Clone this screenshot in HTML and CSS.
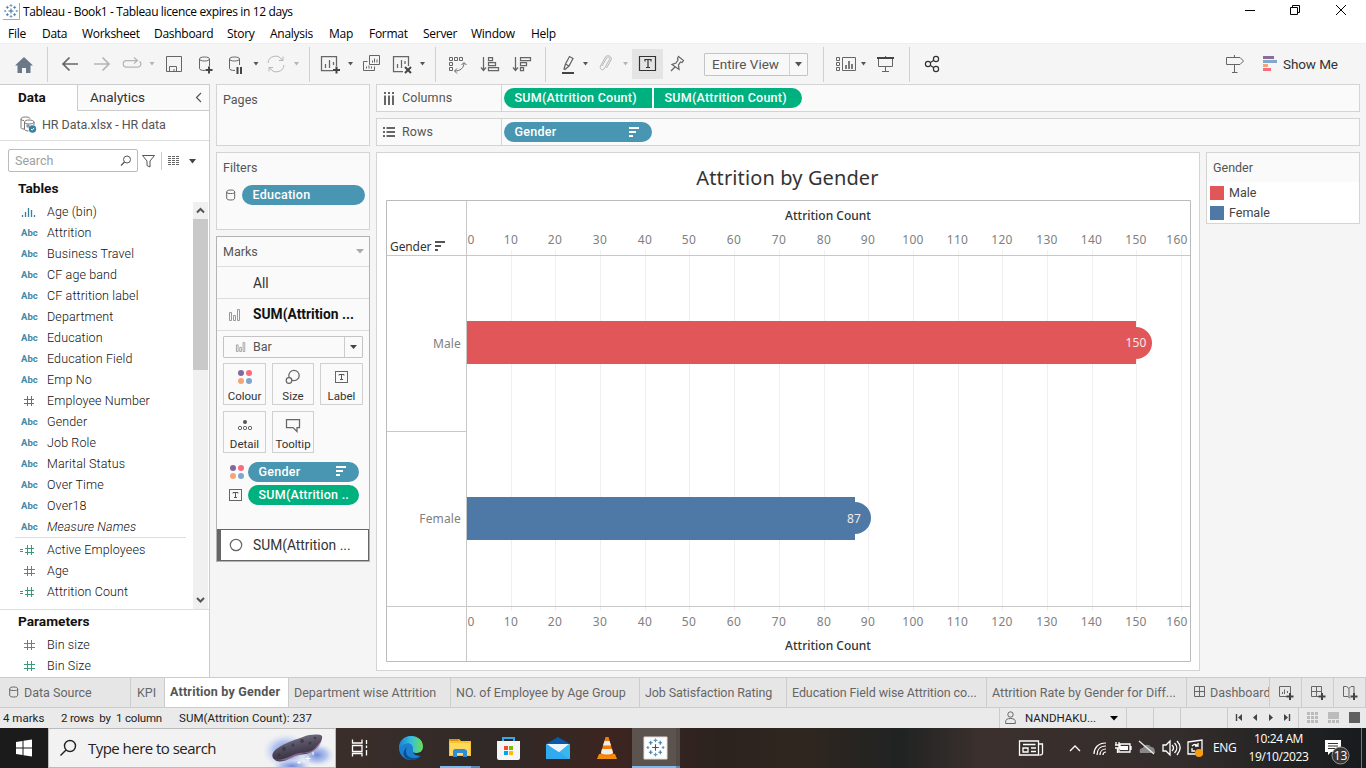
FILE: index.html
```html
<!DOCTYPE html>
<html lang="en">
<head>
<meta charset="utf-8">
<title>Tableau - Book1</title>
<link rel="stylesheet" href="styles.css">
</head>
<body>
<svg width="0" height="0" class="defs">
  <defs>
    <symbol id="hash" viewBox="0 0 18 12"><path d="M7.500 1v10M11.500 1v10M4 4.500h11M4 8.500h11" stroke="#3a9a78" fill="none"/></symbol>
    <symbol id="eqhash" viewBox="0 0 18 12"><path d="M7.500 1v10M11.500 1v10M5 4.500h9M5 8.500h9M0 5.500h3M0 7.500h3" stroke="#3a9a78" fill="none"/></symbol>
    <symbol id="sort" viewBox="0 0 12 11"><path d="M0 1h10M0 5h7M0 9h4" stroke="currentColor" stroke-width="2" fill="none"/></symbol>
    <symbol id="dots" viewBox="0 0 16 16"><circle cx="4" cy="4" r="3" fill="#83689a"/><circle cx="12" cy="4" r="3" fill="#fb6b7d"/><circle cx="4" cy="12" r="3" fill="#f4a578"/><circle cx="12" cy="12" r="3" fill="#7fa6cd"/></symbol>
    <symbol id="tbox" viewBox="0 0 14 12"><rect x=".5" y=".5" width="12" height="11" fill="none" stroke="#666"/><path d="M4 4.500V3.500h5v1M6.500 3.500V9M5 8.500h3" fill="none" stroke="#555"/></symbol>
    <symbol id="bars" viewBox="0 0 14 12"><path d="M1.500 3.500h2v8h-2zM5.500 6.500h2v5h-2zM9.500 .5h2v11h-2z" fill="none" stroke="#999"/></symbol>
    <symbol id="cyl" viewBox="0 0 10 12"><path d="M.7 3v6c0 1.300 1 2 4 2s4-.7 4-2V3M.7 3c0-1.300 1.200-2 4-2s4 .7 4 2-1.200 1.500-4 1.500S.7 4.300.7 3z" fill="none" stroke="#666"/></symbol>
    <symbol id="tableau" viewBox="0 0 22 22"><g fill="none" stroke-width="1.200"><path d="M11 7.500v7M7.500 11h7" stroke="#2a5b8c"/><path d="M11 1.500v4M9 3.500h4M11 16.500v4M9 18.500h4M1.500 11h3M3 9.500v3M17.500 11h3M19 9.500v3" stroke="#6a93b8"/><path d="M6 4v4M4 6h4M16 4v4M14 6h4M6 14v4M4 16h4M16 14v4M14 16h4" stroke="#3f7cab"/></g></symbol>
  </defs>
</svg>

<header class="titlebar">
  <svg class="app-icon" width="17" height="18" viewBox="0 0 17 18"><path d="M0 17.500h16.500V1" fill="none" stroke="#aaa"/><use href="#tableau" x="0" y="1" width="16" height="16" stroke-width="2"/></svg>
  <span class="win-title">Tableau - Book1 - Tableau licence expires in 12 days</span>
  <svg class="win-controls" width="136" height="24" viewBox="1230 0 136 24"><path d="M1245 10.500h10M1290.500 7.500h7v7h-7zM1292.500 7v-1.500h7v7h-1.500M1336 5l10 10M1346 5l-10 10" fill="none" stroke="#000"/></svg>
</header>

<nav class="menubar"><span>File</span><span>Data</span><span>Worksheet</span><span>Dashboard</span><span>Story</span><span>Analysis</span><span>Map</span><span>Format</span><span>Server</span><span>Window</span><span>Help</span></nav>

<div class="toolbar">
  <svg width="47" height="40" viewBox="0 44 47 40"><path d="M24 57l9 8.500h-2.500V73H26v-5h-4v5h-4.500v-7.500H15z" fill="#6a7887"/></svg>
  <i class="sep"></i>
  <svg width="39" height="40" viewBox="48 44 39 40"><path d="M63 64h15M69.500 57.500L63 64l6.500 6.500" class="ic bold"/></svg>
  <svg width="30" height="40" viewBox="87 44 30 40"><path d="M94 64h15M102.500 57.500L109 64l-6.500 6.500" class="ic bold off"/></svg>
  <svg width="43" height="40" viewBox="117 44 43 40"><path d="M137 60.500h-10.500a3 3 0 0 0 0 6.500h11a3 3 0 0 0 2-5.500M134 57.500l3.500 3-3.500 3" class="ic off thick"/><path d="M149.500 62h5l-2.500 3.500z" fill="#b5b5b5"/></svg>
  <svg width="30" height="40" viewBox="160 44 30 40"><path d="M166.500 56.500h15v15h-15zM169.500 71v-4.500h7V71M174 69v2" class="ic"/></svg>
  <svg width="31" height="40" viewBox="190 44 31 40"><path d="M205 70.500c-3.500 0-5.500-.8-5.500-2V59c0-1.300 2-2 5-2s5 .7 5 2v7M199.500 59c0 1.200 2 2 5 2s5-.8 5-2" class="ic"/><path d="M209 66.500v7M205.500 70h7" class="ic dark"/></svg>
  <svg width="41" height="40" viewBox="221 44 41 40"><path d="M235 70.500c-3.500 0-5.500-.8-5.500-2V59c0-1.300 2-2 5-2s5 .7 5 2v6M229.500 59c0 1.200 2 2 5 2s5-.8 5-2" class="ic"/><path d="M237.500 67v7M241 67v7" class="ic dark"/><path d="M253.500 62h5l-2.500 3.500z" fill="#555"/></svg>
  <svg width="47" height="40" viewBox="262 44 47 40"><path d="M268 63a7.500 7.500 0 0 1 14-3M284 65a7.500 7.500 0 0 1-14 3M279 60.500h4v-4M273 67.500h-4v4" class="ic off"/><path d="M294 62h5l-2.500 3.500z" fill="#b5b5b5"/></svg>
  <i class="sep"></i>
  <svg width="48" height="40" viewBox="310 44 48 40"><path d="M333 70.500h-11.500v-14h15V66M325.500 68v-4M329.500 68v-8M333.500 65v-3" class="ic thick"/><path d="M336.500 66.500v7M333 70h7" class="ic dark"/><path d="M348 62h5l-2.500 3.500z" fill="#555"/></svg>
  <svg width="30" height="40" viewBox="358 44 30 40"><path d="M369.500 55.500h10v9h-10zM367.500 61.500h-4v9h11v-4M372.500 62.500v-2M374.500 62.500v-4M377 62.500v-3M366.500 68.500v-2M369 68.500v-3M371.500 68.500v-2" class="ic"/></svg>
  <svg width="47" height="40" viewBox="388 44 47 40"><path d="M403 71.500h-9.500v-15h15V66M397.500 68v-4M401.500 68v-8M405 64v-3" class="ic thick"/><path d="M405 67l6 6M411 67l-6 6" class="ic dark"/><path d="M420 62h5l-2.500 3.500z" fill="#555"/></svg>
  <i class="sep"></i>
  <svg width="39" height="40" viewBox="436 44 39 40"><path d="M449.500 57.500h3v3h-3zM454.500 57.500h3v3h-3zM459.500 57.500h3v3h-3zM449.500 62.500h3v3h-3zM449.500 67.500h3v3h-3zM455 71c5 0 9-3 9-8M461.500 65l2.500-2.500 2.500 2.500M457 68.500l-2.500 2.500 2.500 2.500" class="ic"/></svg>
  <svg width="31" height="40" viewBox="475 44 31 40"><path d="M483.500 57v13M481 67.500l2.500 3 2.500-3M488.500 57.500h4v3h-4zM488.500 62.500h7v3h-7zM488.500 67.500h10v3h-10z" class="ic thick"/></svg>
  <svg width="39" height="40" viewBox="506 44 39 40"><path d="M515.500 57v13M513 67.500l2.500 3 2.500-3M520.500 57.500h10v3h-10zM520.500 62.500h6v3h-6zM520.500 67.500h3v3h-3z" class="ic thick"/></svg>
  <i class="sep"></i>
  <svg width="46" height="40" viewBox="546 44 46 40"><path d="M564 69l1.500-5 4-7.500 3.500 2-4 7.500-4 3.500zM565.500 64l3.500 2" class="ic thick"/><path d="M562 73h12" class="ic dark"/><path d="M583 62h5l-2.500 3.500z" fill="#555"/></svg>
  <svg width="40" height="40" viewBox="592 44 40 40"><path d="M602 66l5-8.500c1-1.500 3.500 0 2.500 2l-5.500 9.500c-1.500 2-5 0-3.500-3l5-9c2-3 7-.5 5.500 3l-4.500 8" class="ic off"/><path d="M623 62h5l-2.500 3.500z" fill="#b5b5b5"/></svg>
  <svg class="pressed" width="31" height="30" viewBox="632 49 31 30"><path d="M639.500 56.500h16v14h-16zM645 61.500v-2h6v2M648 59.500v8M646 67.500h4" class="ic black"/></svg>
  <svg width="41" height="40" viewBox="663 44 41 40"><path d="M678.500 56.500l5 4-1.500 2-1.500-.5-2 3 .5 4.500-7-5 4-1.500 2-3-.5-1.500zM675 67l-4 4" class="ic thick"/></svg>
  <div class="fit-select"><span>Entire View</span><b><svg width="8" height="5"><path d="M0 0h7L3.500 4.500z" fill="#555"/></svg></b></div>
  <i class="gap15"></i><i class="sep"></i>
  <svg width="48" height="40" viewBox="824 44 48 40"><path d="M836.500 57.500h3v3h-3zM836.500 62.500h3v3h-3zM836.500 67.500h3v3h-3zM842.500 57.500h13v13h-13z" class="ic"/><path d="M846 69v-4M849 69v-8M852 69v-5" class="ic bold"/><path d="M861 62h5l-2.500 3.500z" fill="#555"/></svg>
  <svg width="37" height="40" viewBox="872 44 37 40"><path d="M878.500 58v8.500h14V58M885.500 56v2M885.500 67v4M882 71.500h7" class="ic"/><path d="M877 58h17" class="ic dark"/></svg>
  <i class="sep"></i>
  <svg width="290" height="40" viewBox="910 44 290 40"><circle cx="928" cy="64" r="2.600" class="ic black"/><circle cx="936" cy="59" r="2.600" class="ic black"/><circle cx="936" cy="69" r="2.600" class="ic black"/><path d="M930.500 62.500l3-2M930.500 65.500l3 2" class="ic black"/></svg>
  <svg width="60" height="40" viewBox="1200 44 60 40"><path d="M1226.500 57.500h13.500l3.500 3.500-3.500 3.500h-13.500zM1234.500 55v2M1234.500 65v7M1232 72.500h5.500" class="ic"/></svg>
  <svg width="23" height="40" viewBox="1260 44 23 40"><path d="M1263 56h11v3h-11z" fill="#8a6d99"/><path d="M1263 60h14v3h-14z" fill="#82a6cc"/><path d="M1263 64h5v3h-5z" fill="#f4a578"/><path d="M1263 68h8v3h-8z" fill="#fb6b7d"/></svg>
  <span class="showme">Show Me</span>
</div>

<main class="workspace">
  <aside class="data-pane">
    <div class="pane-tabs"><b>Data</b><span>Analytics</span><svg width="20" height="26"><path d="M12 8l-4.500 4.500L12 17" fill="none" stroke="#555" stroke-width="1.200"/></svg></div>
    <div class="source"><svg width="18" height="18" viewBox="0 0 18 18"><path d="M4 13c-2 0-3-.5-3-1.500V3c0-1.500 2-2 4.500-2S10 1.500 10 2.500M1 3c0 1 1.500 1.500 3 1.500M4.500 6v7c0 1.500 2 2 4 2M4.500 6c0-1.300 2-2 4.500-2s5 .7 5 2-2 2-5 2-4.500-.7-4.500-2zM14 6v3M6 10h4M8 8v4" fill="none" stroke="#777"/><circle cx="12.500" cy="13" r="3.700" fill="#3480a0"/><path d="M11 13l1.200 1.200 2-2.300" stroke="#fff" fill="none"/></svg><span>HR Data.xlsx - HR data</span></div>
    <div class="search-row">
      <div class="search"><span>Search</span><svg width="12" height="12"><circle cx="7" cy="4.500" r="3.500" fill="none" stroke="#555"/><path d="M4.500 7L1 10.500" stroke="#555" stroke-width="1.300"/></svg></div>
      <svg width="62" height="24" viewBox="137 148 62 24"><path d="M142.500 154.500h12l-4.500 5.500v6l-3-1.500V160z" fill="none" stroke="#555"/><path d="M161.500 151v18" stroke="#ccc"/><path d="M168 155.500h12M168 157.500h12M168 159.500h12M168 161.500h12M168 163.500h12" stroke="#666" stroke-dasharray="3 1" /><path d="M189 158h7l-3.500 4.500z" fill="#444"/></svg>
    </div>
    <h3 class="tables-h">Tables</h3>
    <div class="fields">
      <ul>
        <li><svg width="18" height="12"><path d="M2.500 9v2M5.500 6v5M8.500 2v9M11.500 4v7M14.500 9v2" stroke="#35809f" fill="none" stroke-width="1.300"/></svg>Age (bin)</li>
        <li><em>Abc</em>Attrition</li><li><em>Abc</em>Business Travel</li><li><em>Abc</em>CF age band</li><li><em>Abc</em>CF attrition label</li><li><em>Abc</em>Department</li><li><em>Abc</em>Education</li><li><em>Abc</em>Education Field</li><li><em>Abc</em>Emp No</li>
        <li><svg width="18" height="12"><path d="M7.500 1v10M11.500 1v10M4 4.500h10M4 8.500h10" stroke="#35809f" fill="none"/></svg>Employee Number</li>
        <li><em>Abc</em>Gender</li><li><em>Abc</em>Job Role</li><li><em>Abc</em>Marital Status</li><li><em>Abc</em>Over Time</li><li><em>Abc</em>Over18</li><li class="slanted"><em>Abc</em>Measure Names</li>
        <li class="rule"></li>
        <li><svg width="18" height="12"><use href="#eqhash"/></svg>Active Employees</li><li><svg width="18" height="12"><use href="#hash"/></svg>Age</li><li><svg width="18" height="12"><use href="#eqhash"/></svg>Attrition Count</li>
      </ul>
      <div class="scroll"><svg width="15" height="17"><path d="M4 10.500l3.500-3.500 3.500 3.500" fill="none" stroke="#555" stroke-width="2"/></svg><i></i><svg width="15" height="17"><path d="M4 6l3.500 3.500L11 6" fill="none" stroke="#555" stroke-width="2"/></svg></div>
    </div>
    <div class="params">
      <h3>Parameters</h3>
      <ul><li><svg width="18" height="12"><use href="#hash"/></svg>Bin size</li><li><svg width="18" height="12"><use href="#hash"/></svg>Bin Size</li></ul>
    </div>
  </aside>

  <section class="cards">
    <div class="card pages"><h4>Pages</h4></div>
    <div class="card filters"><h4>Filters</h4><div class="filter-row"><svg width="10" height="12"><use href="#cyl"/></svg><span class="pill blue">Education</span></div></div>
    <div class="card marks">
      <div class="marks-h"><h4>Marks</h4><svg width="8" height="5"><path d="M0 0h8L4 4.500z" fill="#aaa"/></svg></div>
      <div class="mark-row"><span></span>All</div>
      <div class="mark-row strong"><svg width="14" height="12"><use href="#bars"/></svg>SUM(Attrition ...</div>
      <div class="mark-body">
        <div class="type-select"><svg width="12" height="10"><use href="#bars"/></svg><span>Bar</span><b><svg width="7" height="4"><path d="M0 0h7L3.500 4z" fill="#444"/></svg></b></div>
        <div class="mark-buttons">
          <div><svg width="16" height="16"><use href="#dots"/></svg>Colour</div>
          <div><svg width="16" height="16"><circle cx="9" cy="6.500" r="5.200" class="ic thick"/><circle cx="4" cy="11.500" r="2.800" class="ic thick knock"/></svg>Size</div>
          <div><svg width="14" height="16" viewBox="0 -2 14 16"><use href="#tbox" width="14" height="12"/></svg>Label</div>
          <div><svg width="16" height="16"><circle cx="8" cy="5" r="2" fill="#555"/><circle cx="3" cy="11" r="1.700" class="ic"/><circle cx="8" cy="11" r="1.700" class="ic"/><circle cx="13" cy="11" r="1.700" class="ic"/></svg>Detail</div>
          <div><svg width="16" height="16"><path d="M1.500 2.500h13v8H12v4l-4-4H1.500z" class="ic thick"/></svg>Tooltip</div>
        </div>
        <div class="enc"><svg width="16" height="16"><use href="#dots"/></svg><span class="pill blue">Gender<svg width="12" height="11"><use href="#sort"/></svg></span></div>
        <div class="enc"><svg width="14" height="12"><use href="#tbox"/></svg><span class="pill green">SUM(Attrition ..</span></div>
      </div>
      <div class="mark-row last"><svg width="14" height="14"><circle cx="7" cy="7" r="5.700" fill="none" stroke="#666" stroke-width="1.200"/></svg>SUM(Attrition ...</div>
    </div>
  </section>

  <section class="stage">
    <div class="shelf"><div class="shelf-h"><svg width="12" height="13"><path d="M2 0v2M6 0v2M10 0v2M2 3.500V13M6 3.500V13M10 3.500V13" stroke="#666" stroke-width="2"/></svg>Columns</div><span class="pill green first">SUM(Attrition Count)</span><span class="pill green second">SUM(Attrition Count)</span></div>
    <div class="shelf"><div class="shelf-h"><svg width="12" height="11"><path d="M0 1h2M0 5h2M0 9h2M3.500 1H12M3.500 5H12M3.500 9H12" stroke="#666" stroke-width="2"/></svg>Rows</div><span class="pill blue">Gender<svg width="12" height="11"><use href="#sort"/></svg></span></div>
    <div class="views">
      <div class="viz">
        <h1>Attrition by Gender</h1>
        <svg class="chart" width="805" height="462" viewBox="386 200 805 462">
          <path class="grid" d="M511.500 250v361M555.500 250v361M600.500 250v361M645.500 250v361M689.500 250v361M734.500 250v361M779.500 250v361M824.500 250v361M868.500 250v361M913.500 250v361M958.500 250v361M1002.500 250v361M1047.500 250v361M1092.500 250v361M1136.500 250v361M1181.500 250v361"/>
          <path class="rules" d="M387 255.500h803M387 606.500h803M387 431.500h79M466.500 201v460"/>
          <path class="frame" d="M386.500 200.500h804v461h-804z"/>
          <path d="M467 321h669v43H467z" fill="#e15759"/><circle cx="1136" cy="343" r="16" fill="#e15759"/>
          <path d="M467 497h388v43H467z" fill="#4e79a7"/><circle cx="855" cy="518" r="16" fill="#4e79a7"/>
          <g class="axis"><text x="471" y="244">0</text><text x="511" y="244">10</text><text x="555" y="244">20</text><text x="600" y="244">30</text><text x="645" y="244">40</text><text x="689" y="244">50</text><text x="734" y="244">60</text><text x="779" y="244">70</text><text x="824" y="244">80</text><text x="868" y="244">90</text><text x="913" y="244">100</text><text x="957.500" y="244">110</text><text x="1002" y="244">120</text><text x="1047" y="244">130</text><text x="1091.500" y="244">140</text><text x="1136" y="244">150</text><text x="1177" y="244">160</text></g>
          <g class="axis"><text x="471" y="626">0</text><text x="511" y="626">10</text><text x="555" y="626">20</text><text x="600" y="626">30</text><text x="645" y="626">40</text><text x="689" y="626">50</text><text x="734" y="626">60</text><text x="779" y="626">70</text><text x="824" y="626">80</text><text x="868" y="626">90</text><text x="913" y="626">100</text><text x="957.500" y="626">110</text><text x="1002" y="626">120</text><text x="1047" y="626">130</text><text x="1091.500" y="626">140</text><text x="1136" y="626">150</text><text x="1177" y="626">160</text></g>
          <text class="axis-title" x="828" y="220">Attrition Count</text><text class="axis-title" x="828" y="650">Attrition Count</text>
          <text class="field-label" x="390" y="251">Gender</text>
          <path d="M435 242h10M435 246h6M435 250h3" stroke="#555" stroke-width="2"/>
          <text class="member" x="461" y="348">Male</text><text class="member" x="461" y="523">Female</text>
          <text class="value" x="1136" y="347">150</text><text class="value" x="854" y="523">87</text>
        </svg>
      </div>
      <div class="legend"><h4>Gender</h4><p><i class="male"></i>Male</p><p><i class="female"></i>Female</p></div>
    </div>
  </section>
</main>

<div class="sheet-tabs">
  <span class="t-source"><svg width="10" height="12"><use href="#cyl"/></svg>Data Source</span><span class="kpi">KPI</span><span class="active">Attrition by Gender</span><span>Department wise Attrition</span><span>NO. of Employee by Age Group</span><span class="tight">Job Satisfaction Rating</span><span class="tight">Education Field wise Attrition co...</span><span>Attrition Rate by Gender for Diff...</span><span class="t-dash"><svg width="12" height="12"><path d="M.5.5h10v10H.5zM5.500.5v10M.5 5.500h10" fill="none" stroke="#666"/></svg>Dashboard</span>
  <span class="t-icon"><svg width="18" height="16"><path d="M9 11.500H1.500V1.500h11V8M4.500 9V7M6.500 9V4.500M9.500 8V6" class="ic"/><path d="M12 8v7M8.500 11.500h7" class="ic dark"/></svg></span><span class="t-icon"><svg width="18" height="16"><path d="M9 11.500H1.500V1.500h10V8M6.500 1.500v10M1.500 6.500h10" class="ic"/><path d="M12 8v7M8.500 11.500h7" class="ic dark"/></svg></span><span class="t-icon"><svg width="18" height="16"><path d="M8 13.500l-2-2H1.500V1.500h3l2.500 2 2-2h3V8M7 3.500v9" class="ic"/><path d="M12 8v7M8.500 11.500h7" class="ic dark"/></svg></span>
</div>

<div class="status">
  <span class="s1">4 marks</span><span class="s2">2 rows&nbsp; by&nbsp; 1 column</span><span class="s3">SUM(Attrition Count): 237</span>
  <div class="user"><svg width="12" height="14"><circle cx="5.500" cy="3.500" r="2.700" class="ic"/><path d="M.7 12.500v-2c0-2 1.500-3 4.800-3s4.800 1 4.800 3v2z" class="ic"/></svg><span>NANDHAKU...</span><svg width="8" height="5"><path d="M0 0h8L4 4.500z"/></svg></div>
  <i class="cell"></i><i class="cell"></i><i class="cell wide"></i>
  <svg width="71" height="20" viewBox="1228 708 71 20"><path d="M1236.500 714v7M1289.500 714v7" stroke="#444" stroke-width="1.400"/><path d="M1242 714v7l-4-3.500zM1257 714v7l-4-3.500zM1269 714v7l4-3.500zM1284 714v7l4-3.500z" fill="#444"/><path d="M1298.500 708v20" stroke="#ccc"/></svg>
  <svg width="67" height="20" viewBox="1299 708 67 20"><path d="M1307 712h3v3h-3zM1311 712h3v3h-3zM1315 712h3v3h-3zM1307 716h3v3h-3zM1311 716h3v3h-3zM1315 716h3v3h-3zM1307 720h3v3h-3zM1311 720h3v3h-3zM1315 720h3v3h-3zM1328 712h11v7h-11zM1328 720h3v3h-3zM1332 720h3v3h-3zM1336 720h3v3h-3z" fill="#bbb"/><path d="M1349 712h11v11h-11z" fill="#606060"/></svg>
</div>

<footer class="taskbar">
  <svg class="start" width="48" height="40" viewBox="0 728 48 40"><path d="M16 742l6.500-1v6.500H16zM23.500 740.800l8.500-1.300v8H23.500zM16 748.500h6.500v6.500l-6.500-1zM23.500 748.500H32v8l-8.500-1.300z" fill="#fff"/></svg>
  <div class="tb-search">
    <svg width="18" height="18"><circle cx="11" cy="7" r="5.500" fill="none" stroke="#222" stroke-width="1.400"/><path d="M7 11l-5.500 5.500" stroke="#222" stroke-width="1.400"/></svg>
    <span>Type here to search</span>
    <svg class="rock" width="72" height="38" viewBox="262 729 72 38">
      <defs><radialGradient id="glow"><stop offset="0" stop-color="#7288d8"/><stop offset=".55" stop-color="#a8bcec" stop-opacity=".8"/><stop offset="1" stop-color="#dfe6fa" stop-opacity="0"/></radialGradient><linearGradient id="stone" x1="0" y1="0" x2=".4" y2="1"><stop offset="0" stop-color="#8a8699"/><stop offset=".5" stop-color="#555062"/><stop offset="1" stop-color="#2e2839"/></linearGradient></defs>
      <ellipse cx="286" cy="751" rx="24" ry="18" fill="url(#glow)"/><ellipse cx="317" cy="755" rx="18" ry="12" fill="url(#glow)"/><ellipse cx="292" cy="766" rx="20" ry="7" fill="url(#glow)"/>
      <path d="M273 758c-2-4 1-8 8-12 9-5 14-6 22-9 7-3 17-3 19-1 1 4-4 12-9 15-5 4-13 3-18 5-8 4-17 9-22 2z" fill="url(#stone)"/><path d="M273 758c2 3 10 2 20-3 9-4 15-1 21-6l8-9c-2 8-7 13-14 13-9 0-13 5-21 7-6 1-12 1-14-2z" fill="#c795c4" opacity=".5"/>
      <g fill="#34303f" opacity=".65"><circle cx="284" cy="749" r="2"/><circle cx="293" cy="745" r="1.500"/><circle cx="302" cy="741" r="2"/><circle cx="310" cy="743" r="1.500"/><circle cx="279" cy="755" r="1.500"/><circle cx="315" cy="738" r="1.300"/></g>
      <path d="M308 756v5M305.500 758.500h5M299 761v3M297.500 762.500h3M313 752v3" stroke="#fff"/>
    </svg>
  </div>
  <svg class="task" width="50" height="40" viewBox="336 728 50 40"><path d="M352.500 739.500v3.500h9.500v-3.500M352.500 745.500h9.500v6h-9.500zM352.500 756.500v-3h9.500v3M366.500 740v4M366.500 745.500v2.500M366.500 750v5.500" fill="none" stroke="#fff" stroke-width="1.300"/></svg>
  <svg width="50" height="40" viewBox="386 728 50 40"><defs><linearGradient id="e1"><stop offset="0" stop-color="#1a83d0"/><stop offset=".5" stop-color="#38bde0"/><stop offset="1" stop-color="#6be04a"/></linearGradient></defs><circle cx="411" cy="748" r="12" fill="#1a80d0"/><path d="M399 748c0-7 5-12 12-12s12 4 12 11c0 5-4 6-7 6s-4-1-3-3c1-5-4-8-8-6-3 1-5 3-6 4z" fill="url(#e1)"/><path d="M407 747c-3 6 1 12 8 11 3 0 5-1 7-3-2 3-6 5-11 5-8-1-10-8-4-13z" fill="#0c4e96"/><path d="M423 747c0 5-4 6-7 6s-4-1-3-3c-1 4 4 7 9 5l2-5z" fill="#322926"/></svg>
  <svg width="48" height="40" viewBox="436 728 48 40"><path d="M449 739h10l2 2h10v15h-22z" fill="#f7c52b"/><path d="M449 739h9l1 2h-10z" fill="#d99417"/><path d="M450 743h20v12h-20z" fill="#ffd95e"/><path d="M453 757v-6c0-1 1-2 2-2h9c1 0 3 1 3 2v6h-4v-4h-6v4z" fill="#318bd5"/><path d="M440 766h31v2h-31z" fill="#79baf0"/><path d="M471 766h9v2h-9z" fill="#5888b4"/></svg>
  <svg width="50" height="40" viewBox="484 728 50 40"><path d="M503 742v-4h11v4" fill="none" stroke="#35a8ed" stroke-width="2"/><path d="M497 741h23v17q0 2-2 2h-19q-2 0-2-2z" fill="#f5f5f5"/><path d="M504 746h4v4h-4z" fill="#f25022"/><path d="M509 746h4v4h-4z" fill="#7fba00"/><path d="M504 751h4v4h-4z" fill="#00a4ef"/><path d="M509 751h4v4h-4z" fill="#ffb900"/></svg>
  <svg width="48" height="40" viewBox="534 728 48 40"><path d="M546 744l12-7 12 7z" fill="#0a5aa9"/><path d="M546 744h24v15h-24z" fill="#39b7ef"/><path d="M547 744h22l-11 9z" fill="#eef5fa"/><path d="M546 744l24 15h-24z" fill="#32aaf0"/></svg>
  <svg width="50" height="40" viewBox="582 728 50 40"><path d="M599 754h16l2 5h-20z" fill="#f58a0b"/><path d="M605.500 737h3l5 17c-2 3-11 3-13 0z" fill="#f07c0c"/><path d="M604.500 741h5l1.500 4.500h-8zM602 749h10l1 4c-2 2-10 2-12 0z" fill="#eee"/></svg>
  <svg class="running" width="48" height="40" viewBox="632 728 48 40"><path d="M632 728h44v38h-44z" fill="#5d534e"/><path d="M676 728h4v38h-4z" fill="#514a46"/><path d="M644 737h23v22h-23z" fill="#fff" stroke="#ddd"/><use href="#tableau" x="645" y="737" width="21" height="21"/><path d="M632 766h44v2h-44z" fill="#79baf0"/><path d="M676 766h4v2h-4z" fill="#5888b4"/></svg>
  <svg class="tray" width="312" height="40" viewBox="900 728 312 40"><g fill="none" stroke="#fff" stroke-width="1.300"><path d="M1019.500 741h19v14h-19zM1039 744h3.500v9c0 2-1 2-3 2M1023 744.500h12.500M1023 748h5v4h-5zM1031 748h5M1031 751.500h5"/><path d="M1070 751l5-5 5 5"/><path d="M1094 754c0-6 4-11 12-11M1097 755c0-5 3-9 9-9M1100 755c0-3 2-6 6-6M1103 755c0-2 1-3 3-3" stroke-width="1.200"/><path d="M1119 744h11v8h-11zM1131 746v4M1116 742v3M1119 742v3M1115 745h5v3h-5M1117.500 748v5"/><path d="M1163 745h3l4-4v14l-4-4h-3zM1172 745c2 2 2 4 0 6M1174.500 743c3 3 3 7 0 10M1177 741c4 4 4 9 0 14"/><path d="M1188 742l14-2v14h-14zM1192 746c2-2 4-2 6 0M1198 743v3h-3M1192 748v3h3"/></g><path d="M1120 746h8v4h-8z" fill="#fff"/><path d="M1140 753c-1-4 1-5 3-5 1-4 6-4 8-1 3 0 4 2 4 6z" fill="#888"/><path d="M1139 741l15 13" stroke="#eee" stroke-width="1.300"/><circle cx="1199" cy="753" r="4" fill="#ff9a0b"/></svg>
  <span class="lang">ENG</span>
  <div class="clock"><span>10:24 AM</span><span>19/10/2023</span></div>
  <svg class="notif" width="54" height="40" viewBox="1312 728 54 40"><path d="M1325 740h16v12h-10l-3 3v-3h-3z" fill="#fff"/><path d="M1328 743.500h10M1328 746h10M1328 748.500h7" stroke="#333"/><circle cx="1340.500" cy="755.500" r="8.500" fill="#3a3736" stroke="#999"/><path d="M1361.500 728v40" stroke="#777"/><text x="1340.500" y="760">13</text></svg>
</footer>
</body>
</html>
```
FILE: styles.css
```css
* { box-sizing: border-box; }
body { margin: 0; width: 1366px; height: 768px; overflow: hidden; display: flex; flex-direction: column; background: #f5f5f5; color: #333; font: 12.5px/16px Roboto, sans-serif; }
h1, h3, h4, p, ul { margin: 0; padding: 0; font-weight: 400; }
svg { display: block; flex: none; }
.defs { position: absolute; }
span { white-space: nowrap; }
.ic { fill: none; stroke: #666; stroke-width: 1; }
.ic.thick { stroke-width: 1.25; }
.ic.knock { fill: #fafafa; }
.ic.bold { stroke-width: 1.7; }
.ic.off { stroke: #b5b5b5; }
.ic.dark { stroke: #444; stroke-width: 2; }
.ic.black { stroke: #333; stroke-width: 1.2; }

.titlebar { height: 24px; background: #fff; display: flex; color: #000; font: 12px/24px "Open Sans", sans-serif; }
.app-icon { margin: 2px 3px 0 3px; }
.win-title { letter-spacing: -.37px; flex: 1; }
.menubar { height: 20px; background: #fff; border-bottom: 1px solid #eee; color: #000; display: grid; grid-template-columns: 34px 40px 72px 73px 43px 59px 40px 54px 48px 60px 60px; padding-left: 8px; font: 12px/20px "Open Sans", sans-serif; letter-spacing: -.28px; }
.toolbar { height: 40px; display: flex; align-items: center; background: #f5f5f5; }
.toolbar > svg, .sep, .gap15, .fit-select { flex: none; }
.sep { width: 1px; height: 35px; background: #d0d0d0; }
.gap15 { width: 15px; }
.pressed { background: #e4e4e4; }
.fit-select { width: 104px; height: 23px; border: 1px solid #c4c4c4; background: #f8f8f8; display: flex; align-items: center; font-size: 13.5px; border-radius: 1px; color: #555; }
.fit-select span { flex: 1; padding-left: 7px; }
.fit-select b { width: 18px; height: 21px; border-left: 1px solid #d4d4d4; display: grid; place-items: center; }
.showme { font-size: 13.5px; letter-spacing: -.1px; }

.workspace { height: 593px; display: flex; }
.data-pane { width: 210px; background: #fff; border: solid #ccc; border-width: 1px 1px 0 0; display: flex; flex-direction: column; }
.pane-tabs { height: 26px; display: flex; font-size: 13.5px; line-height: 25px; flex: none; }
.pane-tabs b { width: 77px; padding-left: 18px; color: #111; }
.pane-tabs span { flex: 1; padding-left: 12px; border-left: 1px solid #ccc; }
.pane-tabs span, .pane-tabs svg { background: #fafafa; border-bottom: 1px solid #ccc; }
.source { height: 30px; flex: none; border-bottom: 1px solid #ddd; display: flex; align-items: center; gap: 4px; padding: 0 0 2px 20px; color: #555; letter-spacing: -.05px; }
.search-row { height: 36px; flex: none; display: flex; align-items: center; padding: 3px 0 0 8px; }
.search { width: 130px; height: 23px; border: 1px solid #bbb; border-radius: 2px; display: flex; align-items: center; color: #a0a0a0; padding: 0 5px 0 6px; justify-content: space-between; }
.search-row > svg { margin-left: -1px; }
.data-pane h3 { font-weight: 700; font-size: 13.7px; color: #111; padding-left: 18px; }
.tables-h { line-height: 23px; height: 25px; flex: none; }
.fields { height: 407px; flex: none; display: flex; }
.fields ul { flex: 1; margin-top: -1px; }
.data-pane li { height: 21px; display: flex; align-items: center; list-style: none; padding-left: 20px; gap: 9px; font-weight: 300; color: #111; letter-spacing: .12px; white-space: nowrap; }
.data-pane li em { width: 18px; font: 700 9.5px/12px Roboto, sans-serif; color: #4389a6; padding-left: 1px; padding-top: 1px; letter-spacing: 0; }
.data-pane li.slanted { font-style: italic; }
.data-pane li.rule { height: 2px; margin: 0 7px 0 15px; border-top: 1px solid #ddd; }
.scroll { width: 15px; background: #f0f0f0; margin-right: 1px; display: flex; flex-direction: column; }
.scroll i { background: #c9c9c9; height: 151px; margin-bottom: auto; }
.params { border-top: 1px solid #ddd; flex: 1; overflow: hidden; }
.params h3 { height: 24px; line-height: 23px; }

.cards { width: 154px; margin-left: 6px; display: flex; flex-direction: column; gap: 6px; flex: none; }
.card { border: 1px solid #d4d4d4; background: #fafafa; }
.card h4 { padding-left: 6px; line-height: 30px; height: 30px; color: #555; }
.pages { height: 62px; }
.filters { height: 78px; }
.filter-row { display: flex; align-items: center; gap: 6px; padding-left: 9px; margin-top: 2px; }
.pill { height: 20px; border-radius: 10px; color: #fff; line-height: 20px; padding: 0 11px 0 10.5px; display: flex; align-items: center; justify-content: space-between; font-weight: 500; letter-spacing: .25px; white-space: nowrap; }
.blue { background: #4996b2; }
.green { background: #00b180; }
.filter-row .pill { width: 123px; }
.marks { height: 326px; border-color: #b3b3b3; display: flex; flex-direction: column; }
.marks-h { height: 30px; display: flex; align-items: center; justify-content: space-between; border-bottom: 1px solid #ddd; padding-right: 5px; }
.mark-row { height: 32px; border-bottom: 1px solid #ddd; display: grid; grid-template-columns: 24px 1fr; align-items: center; padding-left: 12px; font-size: 13.8px; white-space: nowrap; }
.mark-row.strong { font-weight: 700; color: #111; padding-bottom: 2px; }
.mark-row.strong svg { margin: 2px 0 0 -1px; }
.mark-body { padding: 5px 6px 0; flex: 1; }
.type-select { height: 22px; border: 1px solid #c4c4c4; border-radius: 1px; display: flex; align-items: center; padding-left: 11px; width: 140px; color: #555; }
.type-select span { flex: 1; padding-left: 6px; }
.type-select b { width: 18px; height: 20px; border-left: 1px solid #ccc; display: grid; place-items: center; }
.mark-buttons { display: grid; grid-template-columns: 43px 42px 43px; column-gap: 6px; row-gap: 6px; margin-top: 5px; }
.mark-buttons div { height: 42px; border: 1px solid #d0d0d0; display: flex; flex-direction: column; align-items: center; padding-top: 5px; gap: 3px; font-size: 11.5px; }
.enc { display: grid; grid-template-columns: 19px 111px; height: 23px; align-items: center; padding-left: 6px; }
.mark-buttons + .enc { margin-top: 7px; }
.mark-row.last { border: 1px solid #666; border-left-width: 4px; margin: 0; height: 32px; padding-left: 8px; background: #fff; }

.stage { width: 984px; margin-left: 6px; display: flex; flex-direction: column; }
.shelf { height: 28px; margin-bottom: 6px; border: 1px solid #d4d4d4; background: #fafafa; display: flex; align-items: center; flex: none; }
.shelf-h { width: 125px; height: 26px; border-right: 1px solid #d4d4d4; display: flex; align-items: center; padding-left: 6px; gap: 7px; margin-right: 2px; color: #555; letter-spacing: .1px; }
.shelf .pill { width: 148px; }
.shelf .first { border-radius: 10px 0 0 10px; margin-right: 2px; }
.shelf .second { border-radius: 0 10px 10px 0; }
.views { display: flex; gap: 6px; align-items: flex-start; }
.viz { width: 824px; height: 519px; background: #fff; border: 1px solid #d4d4d4; padding-left: 9px; }
.viz h1 { font: 20px/28px "Noto Sans", sans-serif; height: 47px; padding: 11px 0 0 0; text-align: center; width: 803px; color: #333; letter-spacing: .12px; }
.grid { stroke: #efefef; fill: none; }
.rules { stroke: #c8c8c8; fill: none; }
.frame { stroke: #bbb; fill: none; }
.chart text { font-family: "Noto Sans", sans-serif; }
.chart .axis { font-size: 12px; fill: #808080; text-anchor: middle; letter-spacing: .3px; }
.axis-title { font-size: 12px; font-weight: 500; fill: #333; text-anchor: middle; }
.field-label { font-size: 12px; fill: #333; letter-spacing: -.1px; }
.member { font-size: 12px; fill: #808080; text-anchor: end; letter-spacing: .15px; }
.value { font-size: 12px; fill: #f4e8e8; text-anchor: middle; letter-spacing: .2px; }
.legend { width: 154px; height: 72px; border: 1px solid #d4d4d4; background: #fff; }
.legend h4 { height: 29px; background: #fafafa; line-height: 30px; padding-left: 6px; color: #555; margin-bottom: 1px; }
.legend p { height: 20px; display: flex; align-items: center; gap: 5px; padding-left: 3px; font-size: 12.5px; color: #444; }
.legend i { width: 14px; height: 14px; }
.male { background: #e15759; }
.female { background: #4e79a7; }

.sheet-tabs { height: 31px; border: solid #ccc; border-width: 1px 0; background: #e6e6e6; display: grid; grid-template-columns: 131px 34px 124px 162px 189px 147px 200px 200px 83px 32px 32px 32px; line-height: 30px; color: #666; }
.sheet-tabs > span { border-right: 1px solid #ccc; padding-left: 5px; overflow: hidden; }
.sheet-tabs > .kpi { padding-left: 6px; }
.sheet-tabs > .tight { letter-spacing: -.1px; }
.sheet-tabs > .active { background: #fff; font-weight: 700; line-height: 28px; color: #555; letter-spacing: .2px; }
.sheet-tabs .t-source, .sheet-tabs .t-dash, .sheet-tabs .t-icon { display: flex; align-items: center; }
.sheet-tabs .t-source { padding-left: 9px; gap: 5px; }
.sheet-tabs .t-source svg { margin-top: -2px; }
.sheet-tabs .t-dash { padding-left: 7px; gap: 4px; }
.sheet-tabs .t-dash svg { margin-top: -2px; }
.sheet-tabs .t-icon { padding-left: 8px; }
.status { height: 20px; background: #eaeaea; display: flex; align-items: center; font-size: 11.5px; color: #222; }
.s1 { width: 61px; padding-left: 3px; }
.s2 { width: 118px; letter-spacing: -.2px; }
.s3 { width: 820px; letter-spacing: .05px; }
.user { width: 128px; height: 20px; border: solid #ccc; border-width: 0 1px; display: flex; align-items: center; padding: 0 6px 0 5px; }
.user span { width: 93px; padding-left: 8px; }
.cell { width: 27px; height: 20px; border-right: 1px solid #ccc; }
.wide { width: 47px; }

.taskbar { height: 40px; display: flex; background: linear-gradient(90deg, #1b1b1b 0, #3a2e2a 340px, #302927 500px, #3c2520 610px, #2c231f 720px, #30261f 800px, #202323 900px, #3b302d 980px, #332d2b 1180px, #171b1d 1366px); color: #fff; font: 12px/18px "Open Sans", sans-serif; }
.start { background: #1b1b1b; }
.tb-search { width: 288px; background: #f2f2f2; border: 1px solid #bbb; color: #222; display: flex; align-items: center; font: 15px/38px "Open Sans", sans-serif; padding-left: 10px; }
.tb-search span { width: 185px; padding-left: 11px; letter-spacing: -.53px; }
.tray { margin-left: 220px; }
.lang { line-height: 40px; width: 32px; padding-left: 1px; letter-spacing: -.3px; }
.clock { width: 69px; display: flex; flex-direction: column; align-items: center; padding-top: 2px; letter-spacing: -.38px; margin-right: -1px; }
.notif text { fill: #fff; font: 12px "Open Sans", sans-serif; text-anchor: middle; }
```
